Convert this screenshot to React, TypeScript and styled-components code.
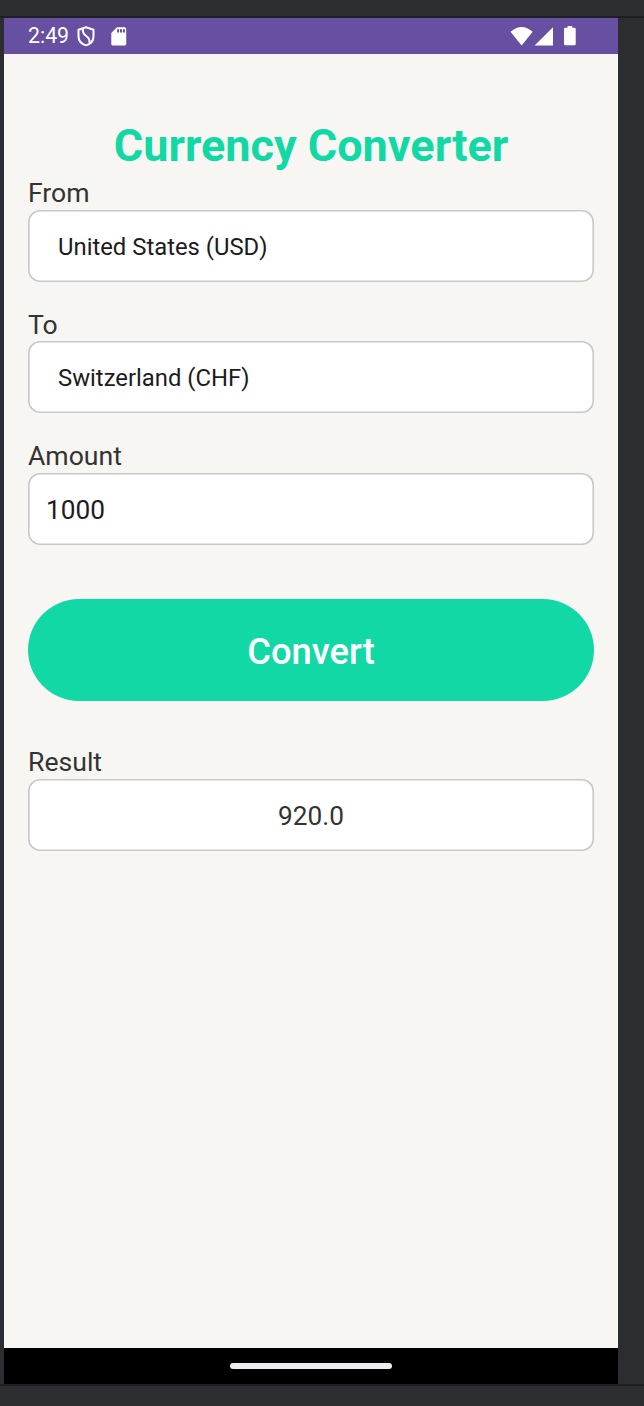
import React, { useState } from "react";
import styled, { createGlobalStyle } from "styled-components";

const GlobalStyle = createGlobalStyle`
  * { box-sizing: border-box; }
  body { margin: 0; background: #2b2d30; font-family: Roboto, "Liberation Sans", sans-serif; }
`;

const Frame = styled.div`
  height: 1406px;
  display: flex;
  flex-direction: column;
  background: #2b2d30;
`;

const FrameEdge = styled.div<{ $side: "top" | "bottom" }>`
  height: ${(p) => (p.$side === "top" ? 18 : 22)}px;
  flex: none;
  border: 0 solid #1e1f22;
  ${(p) => (p.$side === "top" ? "border-bottom-width: 2px;" : "border-top-width: 2px;")}
`;

const Screen = styled.div`
  flex: 1;
  width: 614px;
  margin-left: 4px;
  display: flex;
  flex-direction: column;
  background: #f7f6f2;
`;

const StatusBar = styled.header`
  height: 36px;
  flex: none;
  display: flex;
  align-items: center;
  justify-content: space-between;
  padding: 0 42px 0 24px;
  background: #6750a1;
  color: #fff;
`;

const StatusGroup = styled.div`
  display: flex;
  align-items: center;
`;

const Clock = styled.span`
  width: 49px;
  font-size: 21.3px;
  line-height: 36px;
`;

const StatusIcon = styled.svg<{ $gap?: number }>`
  display: block;
  flex: none;
  margin-left: ${(p) => p.$gap ?? 0}px;
`;

const Content = styled.main`
  flex: 1;
  display: flex;
  flex-direction: column;
  padding: 64px 24px 0;
`;

const Title = styled.h1`
  margin: 0;
  height: 60px;
  font-size: 45px;
  line-height: 55px;
  font-weight: 700;
  text-align: center;
  color: #12d8a6;
`;

const Field = styled.div`
  display: flex;
  flex-direction: column;
  margin-bottom: 28px;
`;

const Label = styled.label`
  height: 31.7px;
  font-size: 26.6px;
  line-height: 30px;
  color: #333;
`;

const Box = styled.div<{ $variant: "select" | "input" | "result" }>`
  height: 72px;
  display: flex;
  align-items: center;
  justify-content: ${(p) => (p.$variant === "result" ? "center" : "flex-start")};
  padding: 2px ${(p) => (p.$variant === "select" ? 30 : 18)}px 0;
  border-radius: 12px;
  background: #fff;
  box-shadow: inset 0 0 0 1.6px #c9c9c9;
  font-size: ${(p) => (p.$variant === "select" ? 23.85 : 26.2)}px;
  color: ${(p) => (p.$variant === "result" ? "#333" : "#1d1b20")};
`;

const ConvertButton = styled.button`
  height: 102.4px;
  margin: 25.6px 0 46.3px;
  padding: 3px 0 0;
  border: 0;
  border-radius: 52px;
  background: #12d8a6;
  color: #fff;
  font: 500 36.3px Roboto, "Liberation Sans", sans-serif;
`;

const NavBar = styled.footer`
  height: 36px;
  flex: none;
  display: flex;
  align-items: center;
  justify-content: center;
  background: #000;
`;

const Handle = styled.div`
  width: 162px;
  height: 6px;
  border-radius: 3px;
  background: #edecee;
`;

export default function App() {
  const [amount] = useState("1000");
  return (
    <>
      <GlobalStyle />
      <Frame>
        <FrameEdge $side="top" />
        <Screen>
          <StatusBar>
            <StatusGroup>
              <Clock>2:49</Clock>
              <StatusIcon width="18" height="21" viewBox="0 0 18 21" fill="none" stroke="#fff" strokeWidth="2">
                <path d="M9 1.3 16.5 3.7V10.2C16.5 14.5 13.4 18 9 19.4 4.6 18 1.5 14.5 1.5 10.2V3.7Z" strokeLinejoin="round" />
                <path d="M5.8 2.6C5.4 6.4 6.6 8 9 9.8 11.8 11.8 13.2 13.6 12.4 17" />
              </StatusIcon>
              <StatusIcon $gap={16} width="16" height="19" viewBox="0 0 16 19" fill="#fff">
                <path fillRule="evenodd" d="M6 .2H13.6Q15.2 .2 15.2 1.8V16.9Q15.2 18.5 13.6 18.5H1.9Q.3 18.5 .3 16.9V5.9ZM6.1 2.2V5.4H8.1V2.2ZM9 2.2V5.4H11V2.2ZM11.9 2.2V5.4H13.9V2.2Z" />
              </StatusIcon>
            </StatusGroup>
            <StatusGroup>
              <StatusIcon width="23" height="19" viewBox="0 0 23 19" fill="#fff">
                <path d="M0.5 4.8Q11.6-4.6 22.7 4.8L11.6 18.4Z" />
              </StatusIcon>
              <StatusIcon $gap={1} width="20" height="19" viewBox="0 0 20 19" fill="#fff">
                <path d="M19 .2V18.6H.6Z" />
              </StatusIcon>
              <StatusIcon $gap={10} width="12" height="20" viewBox="0 0 12 20" fill="#fff">
                <path d="M3.6 0H8.2V1.8H10.5Q11.7 1.8 11.7 3V18Q11.7 19.2 10.5 19.2H1.2Q0 19.2 0 18V3Q0 1.8 1.2 1.8H3.6Z" />
              </StatusIcon>
            </StatusGroup>
          </StatusBar>
          <Content>
            <Title>Currency Converter</Title>
            <Field>
              <Label>From</Label>
              <Box $variant="select">United States (USD)</Box>
            </Field>
            <Field>
              <Label>To</Label>
              <Box $variant="select">Switzerland (CHF)</Box>
            </Field>
            <Field>
              <Label>Amount</Label>
              <Box $variant="input">{amount}</Box>
            </Field>
            <ConvertButton type="button">Convert</ConvertButton>
            <Field>
              <Label>Result</Label>
              <Box $variant="result">920.0</Box>
            </Field>
          </Content>
          <NavBar>
            <Handle />
          </NavBar>
        </Screen>
        <FrameEdge $side="bottom" />
      </Frame>
    </>
  );
}
